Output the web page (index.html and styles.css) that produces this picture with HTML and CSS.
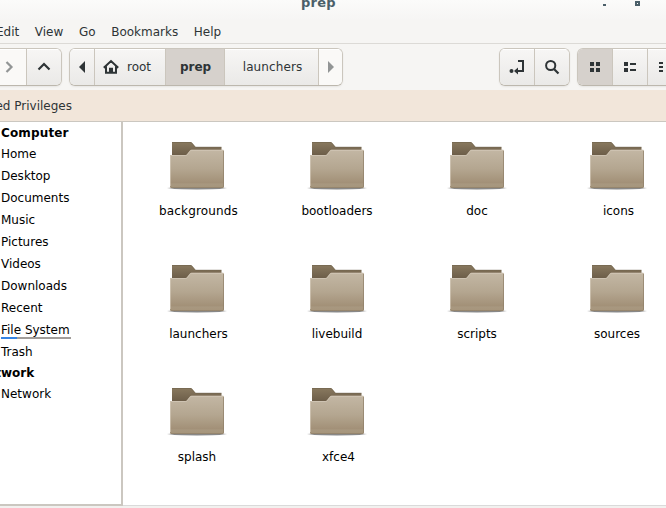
FILE: index.html
```html
<!DOCTYPE html>
<html lang="en">
<head>
<meta charset="utf-8">
<title>prep</title>
<link rel="stylesheet" href="styles.css">
</head>
<body>
<svg class="defs" width="0" height="0">
  <defs>
    <linearGradient id="front" x1="0" y1="0" x2="0" y2="1"><stop offset="0" stop-color="#c3b7a4"/><stop offset=".5" stop-color="#b4a690"/><stop offset=".87" stop-color="#a29077"/><stop offset=".89" stop-color="#a89880"/><stop offset="1" stop-color="#a6957b"/></linearGradient>
    <linearGradient id="back" x1="0" y1="0" x2="0" y2="1"><stop offset="0" stop-color="#89795f"/><stop offset="1" stop-color="#6d5e49"/></linearGradient>
    <linearGradient id="shade" x1="0" y1="0" x2="1" y2="0"><stop offset="0" stop-color="#555" stop-opacity="0"/><stop offset=".12" stop-color="#555" stop-opacity=".7"/><stop offset=".88" stop-color="#555" stop-opacity=".7"/><stop offset="1" stop-color="#555" stop-opacity="0"/></linearGradient>
    <symbol id="folder" viewBox="0 0 64 54">
      <path d="M2 47.500h60v1.300q-30 1.500-60 0z" fill="url(#shade)"/>
      <path d="M7 2h18.500q1 0 1.800 1l3.200 4h26v8H7z" fill="url(#back)"/>
      <path d="M7 2.500h18.500q1 0 1.800 1l3.200 3.500h26" fill="none" stroke="#5f523f" stroke-opacity=".35"/>
      <path d="M5 15h15.500q1 0 1.700-1l2.300-3q.8-1.200 2-1.200H58q1 0 1 1V46.500q0 1.500-1.500 1.500h-51Q5 48 5 46.500z" fill="url(#front)"/>
      <path d="M5.500 46.500v-31h15.200q1 0 1.700-1l2.300-3q.8-1.200 2-1.200h31" fill="none" stroke="#d8cfbf" stroke-opacity=".6"/>
      <path d="M5.500 46.200q0 1.300 1.300 1.300h50.500q1.200 0 1.200-1.300V11" fill="none" stroke="#8e7f68" stroke-opacity=".7"/>
    </symbol>
  </defs>
</svg>
<div class="window">
  <header class="titlebar"><span class="title">prep</span>
    <svg class="controls" width="44" height="10" shape-rendering="crispEdges"><path d="M3 4h3v2H3zM35 1h5v5h-5z" fill="#4b5f69"/><path d="M37 3h1v1h-1z" fill="#fff"/></svg>
  </header>
  <nav class="menubar"><span>Edit</span><span>View</span><span>Go</span><span>Bookmarks</span><span>Help</span></nav>
  <div class="toolbar">
    <div class="group history">
      <button class="off"><svg width="16" height="16"><path d="M5.500 3l5 5-5 5" fill="none" stroke="#929595" stroke-width="2.200"/></svg></button>
      <button><svg width="16" height="16"><path d="M2.500 10.500L8 5l5.500 5.500" fill="none" stroke="#2e3436" stroke-width="2.200"/></svg></button>
    </div>
    <div class="group path">
      <button class="arrow"><svg width="16" height="16"><path d="M11 2v12L5 8z" fill="#2e3436"/></svg></button>
      <button class="root"><svg width="16" height="16"><path d="M.8 8.700L8 2l7.200 6.700M3 7.500v6.300h4v-4h2v4h4V7.500" fill="none" stroke="#2e3436" stroke-width="2"/></svg><span>root</span></button>
      <button class="current"><span>prep</span></button>
      <button class="child"><span>launchers</span></button>
      <button class="arrow off last"><svg width="16" height="16"><path d="M5 2v12l6-6z" fill="#929595"/></svg></button>
    </div>
    <div class="group tools">
      <button><svg width="16" height="16"><path d="M9 2h5v10H8" fill="none" stroke="#2e3436" stroke-width="2"/><path d="M5 12l4-3.500v7z" fill="#2e3436"/><circle cx="2.500" cy="12" r="2" fill="#2e3436"/></svg></button>
      <button><svg width="16" height="16"><circle cx="6.700" cy="6.500" r="4.600" fill="none" stroke="#2e3436" stroke-width="2"/><path d="M10 10l4.500 4.500" stroke="#2e3436" stroke-width="2.200"/></svg></button>
    </div>
    <div class="group views">
      <button class="current"><svg width="16" height="16" shape-rendering="crispEdges"><path d="M3 3h4v4H3zM9 3h4v4H9zM3 9h4v4H3zM9 9h4v4H9z" fill="#2e3436"/></svg></button>
      <button><svg width="16" height="16" shape-rendering="crispEdges"><path d="M2 3h4v4H2zM2 9h4v4H2zM8 4h6v2H8zM8 10h6v2H8z" fill="#2e3436"/></svg></button>
      <button><svg width="16" height="16" shape-rendering="crispEdges"><path d="M2 3h4v2H2zM2 7h4v2H2zM2 11h4v2H2zM9 3h5v2H9zM9 7h5v2H9zM9 11h5v2H9z" fill="#2e3436"/></svg></button>
    </div>
  </div>
  <div class="notice"><span>Elevated Privileges</span></div>
  <main class="content">
    <aside class="sidebar">
      <h2>Computer</h2>
      <a>Home</a><a>Desktop</a><a>Documents</a><a>Music</a><a>Pictures</a><a>Videos</a><a>Downloads</a><a>Recent</a><a class="disk">File System</a><a>Trash</a>
      <h2 class="network"><span>Network</span></h2>
      <a>Network</a>
    </aside>
    <section class="files">
      <figure><svg><use href="#folder"/></svg><figcaption class="nudge wide">backgrounds</figcaption></figure>
      <figure><svg><use href="#folder"/></svg><figcaption>bootloaders</figcaption></figure>
      <figure><svg><use href="#folder"/></svg><figcaption>doc</figcaption></figure>
      <figure><svg><use href="#folder"/></svg><figcaption class="nudge">icons</figcaption></figure>
      <figure><svg><use href="#folder"/></svg><figcaption class="nudge">launchers</figcaption></figure>
      <figure><svg><use href="#folder"/></svg><figcaption>livebuild</figcaption></figure>
      <figure><svg><use href="#folder"/></svg><figcaption>scripts</figcaption></figure>
      <figure><svg><use href="#folder"/></svg><figcaption>sources</figcaption></figure>
      <figure><svg><use href="#folder"/></svg><figcaption>splash</figcaption></figure>
      <figure><svg><use href="#folder"/></svg><figcaption class="nudge">xfce4</figcaption></figure>
    </section>
  </main>
  <footer class="status"></footer>
</div>
</body>
</html>
```
FILE: styles.css
```css
* { box-sizing: border-box; }
body { margin: 0; font: 12px/16px "DejaVu Sans", sans-serif; color: #2e3436; overflow: hidden; }
.defs { display: block; }
.window { width: 666px; height: 508px; overflow: hidden; display: flex; flex-direction: column; background: #f6f5f3; }
.titlebar { height: 20px; flex: none; display: flex; justify-content: space-between; padding: 0 22px 0 301px; background: linear-gradient(#fbfbfa, #f6f5f4); color: #4b5f69; }
.title { font-weight: bold; font-size: 13px; margin-top: -5px; letter-spacing: .25px; }
.menubar { height: 24px; flex: none; display: flex; gap: 15.6px; padding-top: 4px; border-bottom: 1px solid #dcdad6; margin-left: -4px; }
.toolbar { height: 46px; flex: none; display: flex; align-items: flex-start; padding-top: 4px; }
.group { display: flex; flex: none; height: 38px; border: 1px solid #cbc6bd; border-bottom-color: #bcb7ad; border-radius: 6px; overflow: hidden; box-shadow: 0 1px 2px #0001; }
button { font: inherit; color: inherit; display: flex; align-items: center; justify-content: center; width: 35px; padding: 0; border: 0; border-right: 1px solid #cbc6bd; background: linear-gradient(#f7f6f5, #eae9e7); box-shadow: inset 0 1px #fff; }
button:last-child { border-right: 0; width: 34px; }
button svg { flex: none; }
.off { background: #faf9f7; }
.current { background: #d6d1cc; font-weight: bold; box-shadow: none; }
.history { margin-left: -10px; }
.history .off { width: 36px; }
.path { margin-left: 7px; }
.arrow { width: 25px; }
.root { width: 71px; gap: 8px; padding-right: 6px; }
.path .current { width: 59px; padding-left: 1px; }
.child { width: 94px; padding-left: 2px; }
.child span { letter-spacing: .1px; }
.path .last { width: 23px; }
.tools { margin-left: 156px; }
.views { margin-left: 7px; }
.notice { height: 31px; flex: none; padding-top: 8px; background: #f2e6da; display: flex; }
.notice span { margin-left: -42px; white-space: nowrap; }
.content { height: 385px; flex: none; display: flex; color: #000; background: #fff; }
.sidebar { width: 123px; flex: none; border: solid #cbc7c0; border-width: 1px 2px 2px 0; padding: 1px 0 0 1px; display: flex; flex-direction: column; }
h2 { margin: 0; font-size: 12px; line-height: 20px; height: 20px; letter-spacing: .15px; }
.network { margin-left: -24px; letter-spacing: 0; }
.sidebar a { height: 22px; line-height: 22px; }
.disk { width: 70px; background: linear-gradient(90deg, #3584e4 16px, #a19d9a 16px) bottom 2px left / 100% 2px no-repeat; }
.files { flex: 1; border-top: 1px solid #cbc7c0; border-bottom: 1px solid #dadada; display: grid; grid-template-columns: repeat(4, 140px); grid-auto-rows: 123px; padding: 18px 0 0 4px; overflow: hidden; }
figure { margin: 0; display: flex; flex-direction: column; align-items: center; }
figure svg { width: 64px; height: 54px; }
figcaption { margin-top: 9px; }
.nudge { margin-left: 3px; }
.wide { letter-spacing: .15px; }
.status { flex: 1; background: #f2f1ef; }
```
